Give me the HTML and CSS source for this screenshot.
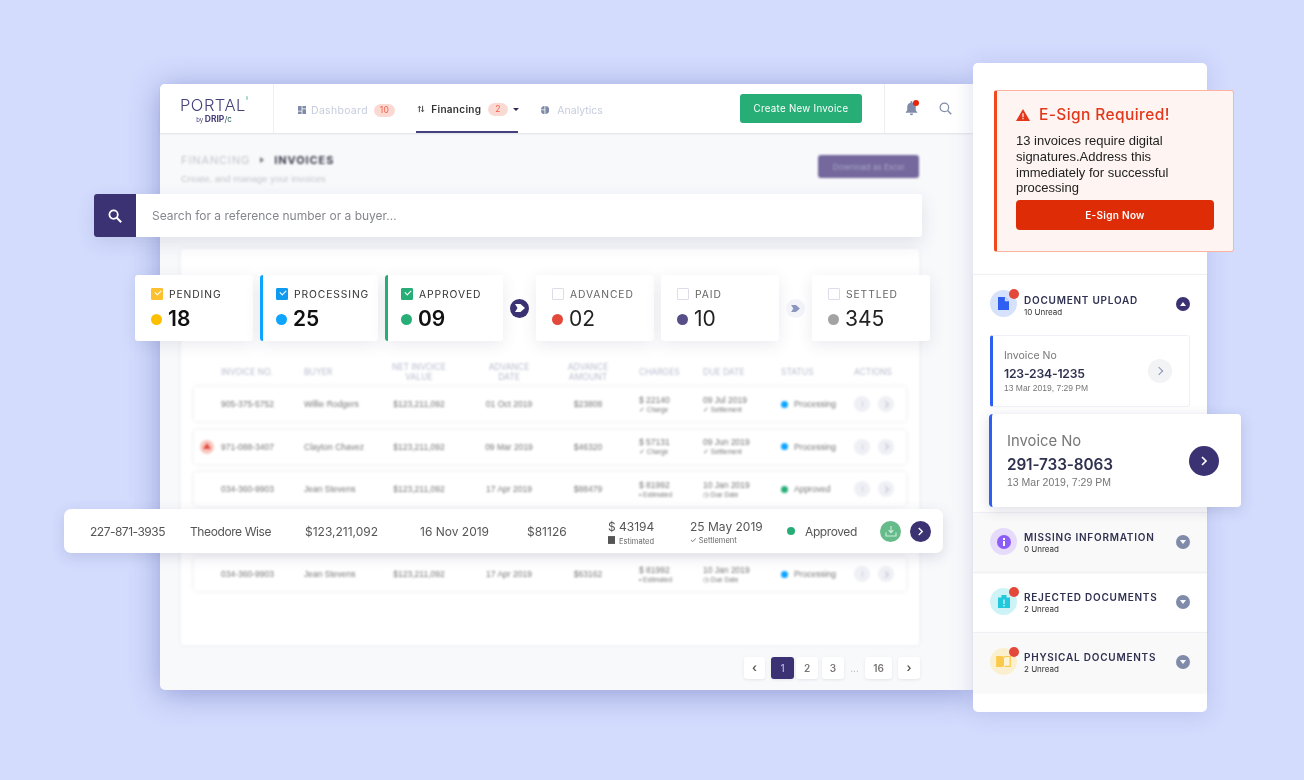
FILE: index.html
```html
<!DOCTYPE html>
<html lang="en">
<head>
    <title>Portal - Invoices</title>
    <meta charset="UTF-8">
    <link rel="stylesheet" href="styles.css">
</head>
<body>
<div class="stage">

    <div class="portal">
        <header class="topbar">
            <div class="logo">
                <div class="logo-name">PORTAL<span class="logo-leaf"></span></div>
                <div class="logo-by">by <b>DRIP</b><i>/c</i></div>
            </div>
            <nav class="nav">
                <a class="nav-item">
                    <svg class="nav-icon" viewBox="0 0 10 10"><path fill="#7f8ba8" d="M0 0h4.5v6H0zM5.5 0H10v3H5.5zM0 7h4.5v3H0zM5.5 4H10v6H5.5z"/></svg>
                    Dashboard <span class="pill">10</span>
                </a>
                <a class="nav-item active">
                    <svg class="nav-icon" viewBox="0 0 10 10"><path fill="none" stroke="#333" stroke-width="1.1" d="M3 9V2M1.4 3.4 3 1.5l1.6 1.9M7 1v7M5.4 6.6 7 8.5l1.6-1.9"/></svg>
                    Financing <span class="pill">2</span>
                    <span class="caret"></span>
                </a>
                <a class="nav-item last">
                    <svg class="nav-icon" viewBox="0 0 10 10"><path fill="#7f8ba8" d="M4.4 0v4.4H0A4.5 4.5 0 0 1 4.4 0zM0 5.4h4.4V10A4.5 4.5 0 0 1 0 5.4zM5.4 0a5 5 0 0 1 0 10z"/></svg>
                    Analytics
                </a>
            </nav>
            <button class="btn-create">Create New Invoice</button>
            <div class="top-tools">
                <span class="bell">
                    <svg viewBox="0 0 14 16" width="13" height="15"><path fill="#7f8ba8" d="M7 0a1 1 0 0 1 1 1v.7A4.6 4.6 0 0 1 11.6 6.200v3.600L13.500 12.500H.5L2.400 9.800V6.200A4.600 4.600 0 0 1 6 1.700V1a1 1 0 0 1 1-1zM5.200 13.500h3.600a1.800 1.800 0 0 1-3.600 0z"/></svg>
                    <i class="bell-dot"></i>
                </span>
                <svg viewBox="0 0 14 14" width="13" height="13"><circle cx="5.800" cy="5.800" r="4.600" fill="none" stroke="#7f8ba8" stroke-width="1.300"/><path d="m9.200 9.200 4 4" stroke="#7f8ba8" stroke-width="1.500"/></svg>
            </div>
        </header>

        <div class="main">
            <div class="page-head">
                <div>
                    <div class="crumbs">FINANCING <span class="crumb-sep"></span> <b>INVOICES</b></div>
                    <div class="crumb-sub">Create, and manage your invoices</div>
                </div>
                <button class="btn-excel">Download as Excel</button>
            </div>

            <div class="panel">
                <div class="tbl-head">
                    <span>INVOICE NO.</span><span>BUYER</span><span class="mid">NET INVOICE<br>VALUE</span><span class="mid">ADVANCE<br>DATE</span><span class="mid">ADVANCE<br>AMOUNT</span><span class="pad">CHARGES</span><span>DUE DATE</span><span>STATUS</span><span>ACTIONS</span>
                </div>

                <div class="tbl-row">
                    <span>905-375-5752</span><span>Willie Rodgers</span><span class="mid">$123,211,092</span><span class="mid">01 Oct 2019</span><span class="mid">$23808</span>
                    <span class="pad two">$ 22140<small>✓ Charge</small></span><span class="two">09 Jul 2019<small>✓ Settlement</small></span>
                    <span class="state"><i class="dot blue"></i>Processing</span>
                    <span class="acts"><i></i><i></i></span>
                </div>
                <div class="tbl-row">
                    <span class="row-alert"></span>
                    <span>971-088-3407</span><span>Clayton Chavez</span><span class="mid">$123,211,092</span><span class="mid">09 Mar 2019</span><span class="mid">$46320</span>
                    <span class="pad two">$ 57131<small>✓ Charge</small></span><span class="two">09 Jun 2019<small>✓ Settlement</small></span>
                    <span class="state"><i class="dot blue"></i>Processing</span>
                    <span class="acts"><i></i><i></i></span>
                </div>
                <div class="tbl-row">
                    <span>034-360-9903</span><span>Jean Stevens</span><span class="mid">$123,211,092</span><span class="mid">17 Apr 2019</span><span class="mid">$88479</span>
                    <span class="pad two">$ 81992<small>▪ Estimated</small></span><span class="two">10 Jan 2019<small>◷ Due Date</small></span>
                    <span class="state"><i class="dot green"></i>Approved</span>
                    <span class="acts"><i></i><i></i></span>
                </div>
                <div class="tbl-row"></div>
                <div class="tbl-row">
                    <span>034-360-9903</span><span>Jean Stevens</span><span class="mid">$123,211,092</span><span class="mid">17 Apr 2019</span><span class="mid">$63162</span>
                    <span class="pad two">$ 81992<small>▪ Estimated</small></span><span class="two">10 Jan 2019<small>◷ Due Date</small></span>
                    <span class="state"><i class="dot blue"></i>Processing</span>
                    <span class="acts"><i></i><i></i></span>
                </div>
            </div>

            <div class="pager">
                <span class="pg arrow">‹</span>
                <span class="pg now">1</span>
                <span class="pg two-pg">2</span>
                <span class="pg three-pg">3</span>
                <span class="pg-gap">...</span>
                <span class="pg wide">16</span>
                <span class="pg arrow next">›</span>
            </div>
        </div>
    </div>

    <div class="side">
        <section class="sec sec-open">
            <div class="sec-head">
                <span class="sec-ico ico-blue has-new">
                    <svg viewBox="0 0 12 14" width="11" height="13"><path fill="#2f5ff0" d="M0 0h7.500L12 4.500V14H0z"/><path fill="#cfdcfb" d="M7.500 0v4.500H12z"/></svg>
                </span>
                <div class="sec-text"><h3>DOCUMENT UPLOAD</h3><p>10 Unread</p></div>
                <span class="toggle up"></span>
            </div>
            <div class="inv-card">
                <div>
                    <div class="inv-label">Invoice No</div>
                    <div class="inv-no">123-234-1235</div>
                    <div class="inv-date">13 Mar 2019, 7:29 PM</div>
                </div>
                <span class="go go-light"></span>
            </div>
        </section>
        <section class="sec sec-grey">
            <div class="sec-head">
                <span class="sec-ico ico-purple">
                    <svg viewBox="0 0 14 14" width="14" height="14"><circle cx="7" cy="7" r="7" fill="#8b5cf6"/><path fill="#fff" d="M6 3h2v2H6zM6 6h2v5H6z"/></svg>
                </span>
                <div class="sec-text"><h3>MISSING INFORMATION</h3><p>0 Unread</p></div>
                <span class="toggle"></span>
            </div>
        </section>
        <section class="sec">
            <div class="sec-head">
                <span class="sec-ico ico-cyan has-new">
                    <svg viewBox="0 0 12 13" width="12" height="13"><path fill="#22c8dc" d="M0 2.500h3.500L3.500 0h5v2.500H12V13H0z"/><path fill="#cdf3f7" d="M5.300 4.500h1.400v4.500H5.300zM5.300 10h1.400v1.400H5.300z"/></svg>
                </span>
                <div class="sec-text"><h3>REJECTED DOCUMENTS</h3><p>2 Unread</p></div>
                <span class="toggle"></span>
            </div>
        </section>
        <section class="sec sec-grey">
            <div class="sec-head">
                <span class="sec-ico ico-yellow has-new">
                    <svg viewBox="0 0 16 12" width="15" height="11"><path fill="#fbc94a" d="M0 0h6.500L8 1.200 9.500 0H16v12H9.500L8 11 6.500 12H0z"/><path fill="#fdf3d6" d="M8.500 2.200 10 1.200h4.600v9.400H10l-1.500.8z"/></svg>
                </span>
                <div class="sec-text"><h3>PHYSICAL DOCUMENTS</h3><p>2 Unread</p></div>
                <span class="toggle"></span>
            </div>
        </section>
    </div>

    <!-- floating pieces -->
    <div class="search">
        <span class="search-btn">
            <svg viewBox="0 0 14 14" width="14" height="14"><circle cx="5.600" cy="5.600" r="4.200" fill="none" stroke="#fff" stroke-width="1.800"/><path d="m8.800 8.800 4.400 4.400" stroke="#fff" stroke-width="2"/></svg>
        </span>
        <span class="search-text">Search for a reference number or a buyer…</span>
    </div>

    <div class="stats">
        <div class="stat">
            <div class="stat-top"><span class="check c-yellow"></span>PENDING</div>
            <div class="stat-num strong"><i class="big-dot" style="background:#fdc000"></i>18</div>
        </div>
        <div class="stat bar-blue">
            <div class="stat-top"><span class="check c-blue"></span>PROCESSING</div>
            <div class="stat-num strong"><i class="big-dot" style="background:#0ea5ff"></i>25</div>
        </div>
        <div class="stat bar-green">
            <div class="stat-top"><span class="check c-green"></span>APPROVED</div>
            <div class="stat-num strong"><i class="big-dot" style="background:#27ae76"></i>09</div>
        </div>
        <span class="link link-dark"><svg viewBox="0 0 10 8" width="10" height="8"><path fill="#fff" d="M0 0h5.500L10 4 5.500 8H0l2.500-4z"/></svg></span>
        <div class="stat muted">
            <div class="stat-top"><span class="check"></span>ADVANCED</div>
            <div class="stat-num"><i class="big-dot" style="background:#e2493a"></i>02</div>
        </div>
        <div class="stat muted">
            <div class="stat-top"><span class="check"></span>PAID</div>
            <div class="stat-num"><i class="big-dot" style="background:#564e86"></i>10</div>
        </div>
        <span class="link"><svg viewBox="0 0 10 8" width="9" height="7"><path fill="#8b97bd" d="M0 0h5.500L10 4 5.500 8H0l2.500-4z"/></svg></span>
        <div class="stat muted">
            <div class="stat-top"><span class="check"></span>SETTLED</div>
            <div class="stat-num"><i class="big-dot" style="background:#a3a3a3"></i>345</div>
        </div>
    </div>

    <div class="hl-row">
        <span class="tight-no">227-871-3935</span>
        <span class="tight">Theodore Wise</span>
        <span>$123,211,092</span>
        <span>16 Nov 2019</span>
        <span>$81126</span>
        <span class="two">$ 43194<small><svg viewBox="0 0 8 9" width="7" height="8"><path fill="#555" d="M0 0h8v9H0z"/></svg> Estimated</small></span>
        <span class="two">25 May 2019<small>✓ Settlement</small></span>
        <span class="hl-state tight"><i></i>Approved</span>
        <span class="hl-acts">
            <i class="act-green"><svg viewBox="0 0 12 12" width="12" height="12"><path fill="none" stroke="#cfeedd" stroke-width="1.100" d="M6 1v6.500M3.600 5.200 6 7.600l2.400-2.400M1 7.500V11h10V7.500"/></svg></i>
            <i class="act-dark"><svg viewBox="0 0 8 10" width="7" height="9"><path fill="none" stroke="#fff" stroke-width="1.600" d="m2 1 4 4-4 4"/></svg></i>
        </span>
    </div>

    <div class="alert">
        <h2>
            <svg viewBox="0 0 14 12" width="14" height="12"><path fill="#e2371a" d="M7 0l7 12H0z"/><path fill="#fef5f3" d="M6.400 4.200h1.200v4H6.400zM6.400 9h1.200v1.200H6.400z"/></svg>
            E-Sign Required!
        </h2>
        <p>13 invoices require digital signatures.Address this immediately for successful processing</p>
        <button class="btn-sign">E-Sign Now</button>
    </div>

    <div class="inv-float">
        <div>
            <div class="inv-label">Invoice No</div>
            <div class="inv-no">291-733-8063</div>
            <div class="inv-date">13 Mar 2019, 7:29 PM</div>
        </div>
        <span class="go go-dark"><svg viewBox="0 0 8 10" width="8" height="10"><path fill="none" stroke="#fff" stroke-width="1.700" d="m2 1 4 4-4 4"/></svg></span>
    </div>

</div>
</body>
</html>
```
FILE: styles.css
```css
html, body {
    margin: 0;
    padding: 0;
    overflow: hidden;
}

body {
    background: #d3dcfd;
    font-family: "Liberation Sans", Arial, sans-serif;
    color: #333;
}

button {
    border: none;
    font-family: Inter, sans-serif;
}

.stage {
    position: relative;
    width: 1304px;
    height: 780px;
    filter: blur(0.35px);
}

/* the app window behind everything */
.portal {
    position: absolute;
    left: 160px;
    top: 84px;
    width: 813px;
    height: 606px;
    background: #f8f9fb;
    border-radius: 5px 0 0 5px;
    box-shadow: 0 4px 30px rgba(60, 70, 160, 0.42);
}

.topbar {
    display: flex;
    align-items: center;
    height: 49px;
    background: #fff;
    border-radius: 5px 0 0 0;
    box-shadow: 0 1px 2px rgba(60, 60, 90, 0.12);
}

.logo {
    box-sizing: border-box;
    width: 114px;
    height: 49px;
    padding: 12px 0 0 20px;
    border-right: 1px solid #eeeff3;
    text-align: center;
}

.logo-name {
    position: relative;
    width: 64px;
    font-family: Inter, sans-serif;
    font-weight: 300;
    font-size: 16.500px;
    line-height: 19px;
    letter-spacing: 0.5px;
    color: #45417c;
}

.logo-leaf {
    position: absolute;
    right: -4px;
    top: 0;
    width: 2px;
    height: 4px;
    border-radius: 2px;
    background: #a5dcc4;
}

.logo-by {
    width: 68px;
    font-family: Inter, sans-serif;
    font-size: 6px;
    line-height: 9px;
    color: #45417c;
}

.logo-by b {
    font-size: 8.5px;
    font-weight: 700;
}

.logo-by i {
    font-size: 8px;
    font-style: normal;
    color: #2d5a5a;
}

.nav {
    display: flex;
    align-items: stretch;
    height: 49px;
    margin-left: 24px;
    flex: 1;
}

.nav-item {
    display: flex;
    align-items: center;
    gap: 5px;
    box-sizing: border-box;
    height: 49px;
    margin-right: 21px;
    padding-top: 3px;
    font-family: Inter, sans-serif;
    font-size: 10.500px;
    letter-spacing: 0.3px;
    color: #c6ccde;
}

.nav-item.active {
    gap: 6px;
    margin-right: 23px;
    padding-left: 1px;
    border-bottom: 2px solid #45417c;
    width: 102px;
    font-size: 10px;
    font-weight: 600;
    color: #333;
}

.nav-item.last {
    gap: 8px;
    letter-spacing: 0;
}

.nav-icon {
    flex: none;
    width: 8px;
    height: 8px;
}

.pill {
    display: inline-block;
    margin-left: 1px;
    padding: 0 6px;
    height: 13px;
    line-height: 13px;
    border-radius: 7px;
    background: #fbd9d3;
    color: #f0604a;
    font-size: 8.5px;
    font-weight: 400;
}

.active .pill {
    padding: 0 7px;
}

.caret {
    margin-left: -1px;
    border: 3px solid transparent;
    border-top: 3.5px solid #2d2a5a;
    border-bottom: 0;
}

.btn-create {
    width: 122px;
    height: 29px;
    margin-right: 22px;
    border-radius: 3px;
    background: #27ae76;
    color: #fff;
    font-size: 9.700px;
    letter-spacing: 0.3px;
}

.top-tools {
    display: flex;
    align-items: center;
    gap: 21px;
    height: 49px;
    padding-left: 20px;
    width: 89px;
    box-sizing: border-box;
    border-left: 1px solid #eeeff3;
}

.bell {
    position: relative;
    display: flex;
}

.bell-dot {
    position: absolute;
    right: -1px;
    top: -1px;
    width: 6px;
    height: 6px;
    border-radius: 50%;
    background: #e8250c;
}

.main {
    padding: 0 54px 0 21px;
}

.page-head {
    display: flex;
    justify-content: space-between;
    align-items: flex-start;
    height: 116px;
    padding-top: 20px;
    box-sizing: border-box;
    filter: blur(0.9px);
}

.crumbs {
    display: flex;
    align-items: center;
    gap: 10px;
    font-family: Inter, sans-serif;
    font-size: 11px;
    line-height: 14px;
    letter-spacing: 0.9px;
    color: #c4c6cc;
}

.crumbs b {
    color: #3e4050;
}

.crumb-sep {
    border: 3px solid transparent;
    border-left: 4px solid #777;
    border-right: 0;
}

.crumb-sub {
    margin-top: 6px;
    font-size: 9.5px;
    color: #c4c6cc;
}

.btn-excel {
    width: 101px;
    height: 23px;
    margin-top: 2px;
    border-radius: 3px;
    background: #74689c;
    color: #aaa4c8;
    font-size: 8px;
}

.panel {
    position: relative;
    box-sizing: border-box;
    height: 396px;
    padding: 110px 13px 0;
    background: #fff;
    border-radius: 3px;
    box-shadow: 0 0 4px rgba(60, 60, 90, 0.08);
    filter: blur(0.8px);
}

.tbl-head, .tbl-row {
    display: grid;
    grid-template-columns: 83px 76px 78px 102px 56px 87px 78px 73px 1fr;
    align-items: center;
    padding-left: 27px;
}

.tbl-head {
    height: 26px;
    margin-bottom: 2px;
    font-family: Inter, sans-serif;
    font-size: 8.5px;
    line-height: 10px;
    color: #b9bdcf;
}

.tbl-row {
    position: relative;
    height: 34px;
    margin-bottom: 8.500px;
    border-radius: 3px;
    background: #fff;
    box-shadow: 0 0 4px rgba(60, 60, 90, 0.11);
    font-size: 8.5px;
    color: #777;
}

.mid {
    text-align: center;
}

.pad {
    padding-left: 23px;
}

.two {
    line-height: 10px;
}

.two small {
    display: block;
    font-size: 6.5px;
    line-height: 9px;
}

.row-alert {
    position: absolute;
    left: 6px;
    top: 10px;
    width: 14px;
    height: 14px;
    border-radius: 50%;
    background: #f8c8c0;
}

.row-alert::after {
    content: "";
    position: absolute;
    left: 3px;
    top: 3px;
    border: 4px solid transparent;
    border-bottom: 6px solid #e2493a;
    border-top: 0;
}

.state {
    display: flex;
    align-items: center;
    gap: 6px;
}

.dot {
    width: 7px;
    height: 7px;
    border-radius: 50%;
}

.dot.blue { background: #0ea5ff; }
.dot.green { background: #27ae76; }

.acts {
    display: flex;
    gap: 8px;
}

.acts i {
    position: relative;
    width: 16px;
    height: 16px;
    border-radius: 50%;
    background: #eff0f5;
}

.acts i:first-child::after {
    content: "";
    position: absolute;
    left: 7.500px;
    top: 5px;
    width: 1px;
    height: 6px;
    background: #cfd2de;
}

.acts i:last-child::after {
    content: "";
    position: absolute;
    left: 4.500px;
    top: 5.500px;
    width: 4px;
    height: 4px;
    border-top: 1px solid #bcc0d0;
    border-right: 1px solid #bcc0d0;
    transform: rotate(45deg);
}

.pager {
    display: flex;
    justify-content: flex-end;
    align-items: center;
    margin: 12px -1px 0 0;
    filter: blur(0.4px);
}

.pg {
    width: 22px;
    height: 22px;
    line-height: 22px;
    border-radius: 3px;
    background: #fff;
    text-align: center;
    font-family: Inter, sans-serif;
    font-weight: 600;
    font-size: 10px;
    color: #777;
    box-shadow: 0 1px 3px rgba(60, 60, 90, 0.1);
}

.pg.now {
    width: 23px;
    margin-left: 6px;
    background: #3a3272;
    color: #a9a4cf;
}

.two-pg { margin-left: 2px; }
.three-pg { margin-left: 4px; }
.pg.wide { width: 27px; }
.pg.arrow { width: 21px; font-size: 12px; color: #555; }
.pg.next { width: 22px; margin-left: 6px; }

.pg-gap {
    width: 21px;
    text-align: center;
    font-size: 10px;
    color: #bbb;
}

/* right hand panel */
.side {
    position: absolute;
    left: 973px;
    top: 63px;
    box-sizing: border-box;
    width: 234px;
    height: 649px;
    padding-top: 211px;
    background: #fff;
    border-radius: 5px;
    box-shadow: 0 2px 22px rgba(70, 80, 170, 0.18);
}

.sec {
    box-sizing: border-box;
    height: 60px;
    padding: 0 17px;
    border-top: 1px solid #eff0f4;
    box-shadow: 0 1px 3px rgba(60, 60, 90, 0.06);
}

.sec-open {
    height: 238px;
}

.sec-grey {
    background: #f9f9f9;
}

.sec-head {
    display: flex;
    align-items: center;
    gap: 7px;
    height: 57px;
}

.sec-ico {
    position: relative;
    display: flex;
    align-items: center;
    justify-content: center;
    width: 27px;
    height: 27px;
    border-radius: 50%;
    flex: none;
}

.ico-blue { background: #d6e1fb; }
.ico-purple { background: #e6dbfb; }
.ico-cyan { background: #cdf3f7; }
.ico-yellow { background: #faf0d0; }

.has-new::after {
    content: "";
    position: absolute;
    right: -2px;
    top: -1px;
    width: 10px;
    height: 10px;
    border-radius: 50%;
    background: #e2493a;
}

.sec-text {
    flex: 1;
    padding-top: 2px;
}

.sec-open .sec-text {
    padding-top: 4px;
}

.sec-text h3 {
    margin: 0;
    font-family: Inter, sans-serif;
    font-size: 10px;
    line-height: 12px;
    font-weight: 600;
    letter-spacing: 0.76px;
    color: #2e3150;
    white-space: nowrap;
}

.sec-text p {
    margin: 1px 0 0;
    font-family: Inter, sans-serif;
    font-size: 8px;
    line-height: 10px;
    color: #333;
}

.toggle {
    position: relative;
    width: 14px;
    height: 14px;
    border-radius: 50%;
    background: #7f8ba8;
    flex: none;
}

.toggle::after {
    content: "";
    position: absolute;
    left: 3.500px;
    top: 5.500px;
    border: 3.500px solid transparent;
    border-top: 4px solid #fff;
    border-bottom: 0;
}

.toggle.up {
    background: #3a3272;
}

.toggle.up::after {
    border-top: 0;
    border-bottom: 4px solid #fff;
}

.inv-card {
    display: flex;
    align-items: center;
    justify-content: space-between;
    box-sizing: border-box;
    width: 200px;
    height: 72px;
    margin-top: 3px;
    padding: 0 17px 0 11px;
    border: 1px solid #f0f1f8;
    border-left: 3px solid #2f5ff0;
    border-radius: 3px;
}

.inv-label {
    font-family: Inter, sans-serif;
    font-size: 10.5px;
    line-height: 14px;
    color: #777;
}

.inv-no {
    margin-top: 3px;
    font-family: Inter, sans-serif;
    font-size: 12.200px;
    line-height: 16px;
    font-weight: 600;
    letter-spacing: -0.2px;
    color: #2e3150;
}

.inv-date {
    margin-top: 1px;
    font-size: 8.5px;
    line-height: 11px;
    color: #777;
}

.go {
    display: flex;
    align-items: center;
    justify-content: center;
    border-radius: 50%;
    flex: none;
}

.go-light {
    position: relative;
    width: 24px;
    height: 24px;
    background: #f2f3f5;
}

.go-light::after {
    content: "";
    width: 5px;
    height: 5px;
    margin-left: -3px;
    border-top: 1.200px solid #8a93b5;
    border-right: 1.200px solid #8a93b5;
    transform: rotate(45deg);
}

.go-dark {
    width: 30px;
    height: 30px;
    background: #3a3272;
}

/* floating over the window */
.search {
    position: absolute;
    left: 94px;
    top: 194px;
    display: flex;
    align-items: center;
    width: 828px;
    height: 43px;
    background: #fff;
    border-radius: 3px;
    box-shadow: 0 6px 18px rgba(60, 60, 110, 0.12);
}

.search-btn {
    display: flex;
    align-items: center;
    justify-content: center;
    width: 42px;
    height: 43px;
    background: #3a3272;
    border-radius: 3px 0 0 3px;
}

.search-text {
    margin-left: 16px;
    font-family: Inter, sans-serif;
    font-size: 12px;
    color: #85878f;
}

.stats {
    position: absolute;
    left: 135px;
    top: 275px;
    display: flex;
    align-items: center;
    gap: 7px;
}

.stat {
    box-sizing: border-box;
    width: 118px;
    height: 66px;
    padding: 12px 0 0 16px;
    background: #fff;
    border-radius: 3px;
    box-shadow: 0 4px 16px rgba(60, 60, 110, 0.1);
}

.bar-blue { border-left: 3px solid #0ea5ff; padding-left: 13px; }
.bar-green { border-left: 3px solid #27ae76; padding-left: 13px; }

.stat-top {
    display: flex;
    align-items: center;
    gap: 6px;
    height: 13px;
    font-family: Inter, sans-serif;
    font-size: 10.300px;
    letter-spacing: 0.9px;
    color: #333;
}

.muted .stat-top {
    color: #666;
}

.check {
    position: relative;
    box-sizing: border-box;
    width: 12px;
    height: 12px;
    border: 1px solid #dcdde8;
    border-radius: 1px;
}

.c-yellow { background: #fdc02f; border-color: #fdc02f; }
.c-blue { background: #0f9af0; border-color: #0f9af0; }
.c-green { background: #27ae76; border-color: #27ae76; }

.c-yellow::after, .c-blue::after, .c-green::after {
    content: "";
    position: absolute;
    left: 2.500px;
    top: 1.500px;
    width: 5px;
    height: 3px;
    border-left: 1px solid #fff;
    border-bottom: 1px solid #fff;
    transform: rotate(-45deg);
}

.stat-num {
    display: flex;
    align-items: center;
    gap: 6px;
    margin-top: 4px;
    font-family: Inter, sans-serif;
    font-size: 21px;
    line-height: 30px;
    color: #222;
}

.stat-num.strong {
    font-weight: 600;
    color: #111;
}

.big-dot {
    width: 11px;
    height: 11px;
    border-radius: 50%;
}

.link {
    display: flex;
    align-items: center;
    justify-content: center;
    width: 19px;
    height: 19px;
    border-radius: 50%;
    background: #f2f4f9;
}

.link-dark {
    background: #3a3272;
}

.hl-row {
    position: absolute;
    left: 64px;
    top: 509px;
    box-sizing: border-box;
    display: grid;
    grid-template-columns: 100px 115px 115px 107px 81px 82px 97px 93px 1fr;
    align-items: center;
    width: 879px;
    height: 44px;
    padding-left: 26px;
    background: #fff;
    border-radius: 7px;
    box-shadow: 0 4px 14px rgba(60, 60, 110, 0.16);
    font-family: Inter, sans-serif;
    font-size: 12px;
    color: #555;
}

.tight-no { letter-spacing: -0.5px; }
.tight { letter-spacing: -0.4px; }

.hl-row .two {
    margin-top: 3px;
    line-height: 15px;
}

.hl-row small {
    margin-top: 2px;
    font-size: 7.5px;
    line-height: 10px;
    color: #666;
}

.hl-row small svg {
    margin-right: 2px;
}

.hl-state {
    display: flex;
    align-items: center;
    gap: 10px;
}

.hl-state i {
    width: 8px;
    height: 8px;
    border-radius: 50%;
    background: #27ae76;
}

.hl-acts {
    display: flex;
    gap: 9px;
}

.hl-acts i {
    display: flex;
    align-items: center;
    justify-content: center;
    width: 21px;
    height: 21px;
    border-radius: 50%;
}

.act-green { background: #66bb8a; }
.act-dark { background: #3a3272; }

.alert {
    position: absolute;
    left: 994px;
    top: 90px;
    box-sizing: border-box;
    width: 240px;
    height: 162px;
    padding: 14px 19px 0 19px;
    background: #fef5f3;
    border: 1px solid #fdb3a0;
    border-left: 3px solid #f0491d;
    border-radius: 3px;
}

.alert h2 {
    display: flex;
    align-items: center;
    gap: 9px;
    margin: 0 0 8px;
    font-family: Inter, sans-serif;
    font-size: 15.500px;
    line-height: 20px;
    font-weight: 500;
    letter-spacing: 0.4px;
    color: #e2371a;
}

.alert p {
    margin: 0;
    width: 170px;
    font-size: 13px;
    line-height: 15.800px;
    color: #222;
}

.btn-sign {
    display: block;
    width: 198px;
    height: 30px;
    margin-top: 4px;
    border-radius: 4px;
    background: #dd2c06;
    color: #fff;
    font-size: 10px;
    font-weight: 600;
    letter-spacing: 0.3px;
}

.inv-float {
    position: absolute;
    left: 989px;
    top: 414px;
    box-sizing: border-box;
    display: flex;
    align-items: center;
    justify-content: space-between;
    width: 252px;
    height: 93px;
    padding: 0 22px 2px 15px;
    background: #fff;
    border-left: 3px solid #2f5ff0;
    border-radius: 4px;
    box-shadow: 0 3px 14px rgba(60, 60, 110, 0.18);
}

.inv-float .inv-label {
    font-size: 14.800px;
    line-height: 18px;
}

.inv-float .inv-no {
    margin-top: 4px;
    font-size: 15.300px;
    line-height: 21px;
    letter-spacing: -0.1px;
}

.inv-float .inv-date {
    margin-top: 1px;
    font-size: 10.500px;
    line-height: 12px;
}

.inv-float .go {
    margin-top: 2px;
}
```
